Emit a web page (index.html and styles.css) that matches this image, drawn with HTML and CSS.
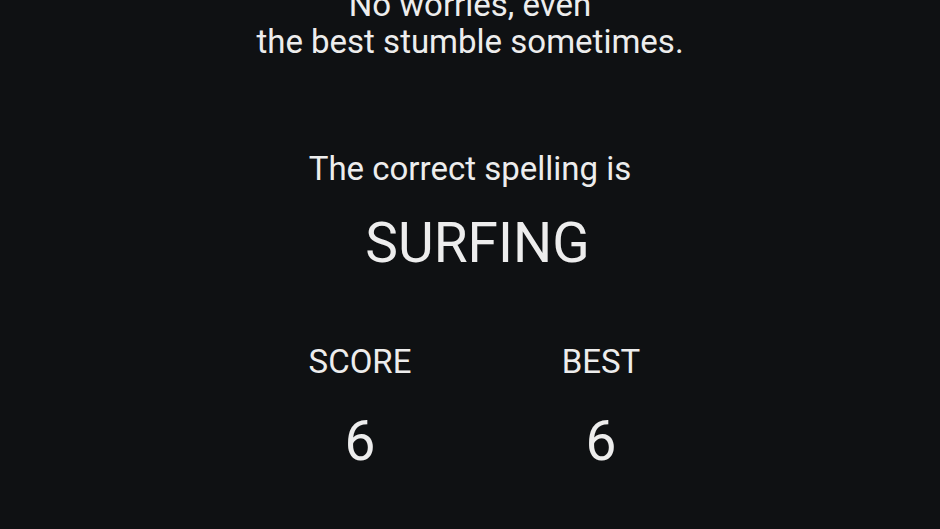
FILE: index.html
```html
<!DOCTYPE html>
<html lang="en">
<head>
<meta charset="utf-8">
<title>Result</title>
<link rel="stylesheet" href="styles.css">
</head>
<body>
<main class="screen">
  <p class="message">No worries, even<br>the best stumble sometimes.</p>
  <p class="label">The correct spelling is</p>
  <p class="word">SURFING</p>
  <div class="scores">
    <div class="score-col">
      <div class="score-label">SCORE</div>
      <div class="score-value">6</div>
    </div>
    <div class="score-col">
      <div class="score-label">BEST</div>
      <div class="score-value">6</div>
    </div>
  </div>
</main>
</body>
</html>
```

FILE: styles.css
```css
html, body {
  margin: 0;
  padding: 0;
  background: #0f1113;
}
body {
  width: 940px;
  height: 529px;
  overflow: hidden;
  font-family: Roboto, "Noto Sans", sans-serif;
  color: #ededed;
}
.screen {
  display: flex;
  flex-direction: column;
  align-items: center;
  text-align: center;
}
.message {
  margin: -14px 0 0;
  font-size: 33px;
  line-height: 37px;
}
.label {
  margin: 89px 0 0;
  font-size: 33px;
  line-height: 40px;
}
.word {
  margin: 22px 0 0 15px;
  font-size: 55px;
  line-height: 64px;
}
.scores {
  display: flex;
  margin: 67px 0 0;
  padding-left: 21px;
}
.score-col {
  width: 241px;
  display: flex;
  flex-direction: column;
  align-items: center;
}
.score-label {
  font-size: 33px;
  line-height: 40px;
}
.score-value {
  margin-top: 27px;
  font-size: 55px;
  line-height: 64px;
}
```
